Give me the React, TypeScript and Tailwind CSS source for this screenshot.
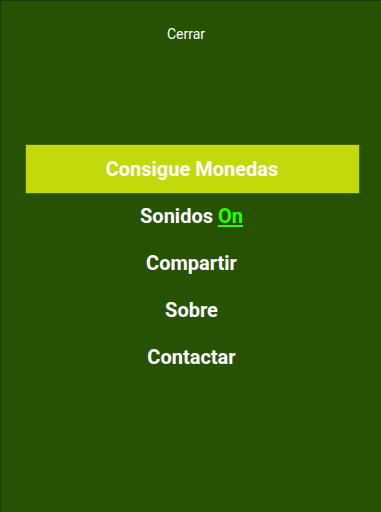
export default function App() {
  const items = ['Compartir', 'Sobre', 'Contactar']
  return (
    <div
      className="w-[381px] h-[512px] bg-[#285203] border-l border-t border-[#1c3a02] flex flex-col items-center text-white"
      style={{ fontFamily: 'Roboto, sans-serif' }}
    >
      <div className="mt-[24px] mr-[10px] h-[18px] text-[14px] leading-[18px]">Cerrar</div>
      <div className="mt-[101px] w-[335px] h-[50px] ml-[2px] bg-[#c4d90a] border border-[#3f6a05] flex items-center justify-center text-[20px] font-bold">
        Consigue Monedas
      </div>
      <div className="mt-[-2px] ml-[1px] h-[47px] flex items-center text-[20px] font-bold">
        Sonidos&nbsp;<span className="text-[#2bff00] underline underline-offset-2">On</span>
      </div>
      {items.map((t) => (
        <div key={t} className="h-[47px] ml-[1px] flex items-center text-[20px] font-bold">
          {t}
        </div>
      ))}
    </div>
  )
}
